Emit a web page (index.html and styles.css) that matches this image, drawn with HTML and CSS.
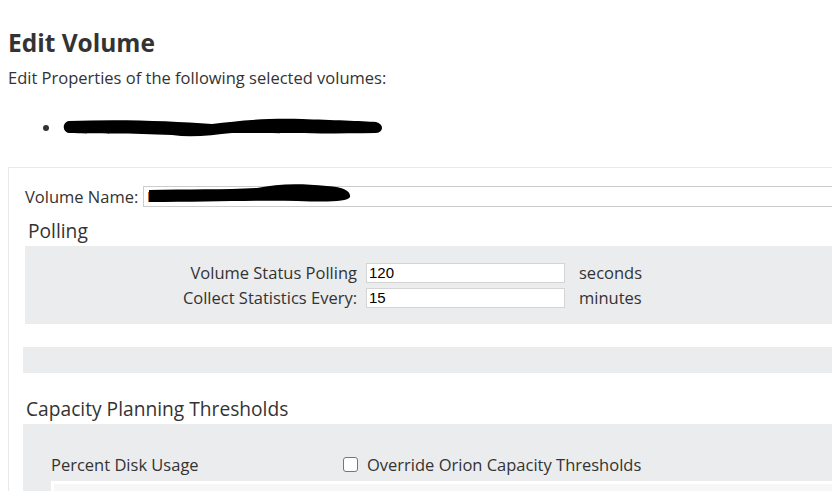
FILE: index.html
```html
<!DOCTYPE html>
<html>
<head>
<meta charset="utf-8">
<link rel="stylesheet" href="styles.css">
</head>
<body>
<div class="page">
  <h1 class="title">Edit Volume</h1>
  <p class="subtitle">Edit Properties of the following selected volumes:</p>
  <ul class="vol-list">
    <li><svg class="redact" width="322" height="22" viewBox="0 0 322 22"><path d="M7 4 C60 2 110 4 150 7 C175 4 200 1 240 2 C270 3 300 4 314 5 C322 7 322 15 314 16 C260 17 200 16 170 16 C150 18 130 21 110 18 C70 16 30 17 7 16 C0 15 0 5 7 4 Z" fill="#000"/></svg></li>
  </ul>
  <div class="card">
    <div class="name-row">
      <label class="name-label">Volume Name:</label>
      <div class="name-input"><span class="name-text">D</span><svg class="redact-name" width="205" height="24" viewBox="0 0 205 24"><path d="M2 7 C40 6 80 7 110 5 C130 1 150 0 180 3 C198 4 204 9 203 14 C200 19 180 19 150 18 C110 17 60 19 2 19 Z" fill="#000"/></svg></div>
    </div>
    <h2 class="section-title polling-title">Polling</h2>
    <div class="panel polling">
      <div class="poll-grid">
        <span class="poll-label">Volume Status Polling</span>
        <span class="poll-input">120</span>
        <span class="poll-unit">seconds</span>
        <span class="poll-label">Collect Statistics Every:</span>
        <span class="poll-input">15</span>
        <span class="poll-unit">minutes</span>
      </div>
    </div>
    <div class="panel spacer-bar"></div>
    <h2 class="section-title cap-title">Capacity Planning Thresholds</h2>
    <div class="panel capacity">
      <div class="cap-row">
        <span class="cap-label">Percent Disk Usage</span>
        <span class="cap-check"><span class="checkbox"></span>Override Orion Capacity Thresholds</span>
      </div>
      <div class="cap-inner"></div>
    </div>
  </div>
</div>
</body>
</html>
```
FILE: styles.css
```css
html, body {
  margin: 0;
  padding: 0;
  background: #fff;
  overflow: hidden;
}
body {
  font-family: "Open Sans", "Noto Sans", sans-serif;
  color: #333;
}
.page {
  padding: 0 0 0 8px;
  width: 1100px;
}
.title {
  font-size: 24.5px;
  font-weight: 700;
  margin: 0;
  padding-top: 27px;
  line-height: 32px;
  color: #333;
}
.subtitle {
  margin: 8px 0 0 0;
  font-size: 16.5px;
  line-height: 22px;
  color: #333;
}
.vol-list {
  margin: 28px 0 0 0;
  padding-left: 54px;
  list-style: disc;
  font-size: 16.5px;
  line-height: 22px;
  height: 22px;
}
.redact {
  display: block;
  margin-left: 0;
}
.card {
  margin-top: 28px;
  border-top: 1px solid #e8e8e8;
  border-left: 1px solid #e8e8e8;
  padding: 18px 0 0 14px;
  height: 400px;
}
.name-row {
  display: flex;
  align-items: center;
  gap: 5px;
  padding-left: 2px;
}
.name-label {
  font-size: 16.5px;
  line-height: 21px;
}
.name-input {
  position: relative;
  width: 800px;
  height: 19px;
  border: 1px solid #ccc;
  font-family: "Liberation Sans", Arial, sans-serif;
  font-size: 15px;
  line-height: 19px;
  padding-left: 3px;
  color: #000;
}
.name-text {
  color: #000;
}
.redact-name {
  position: absolute;
  left: 3px;
  top: -4px;
}
.section-title {
  font-size: 19.2px;
  font-weight: 400;
  margin: 0;
  line-height: 26px;
  color: #333;
}
.polling-title {
  margin-top: 11px;
  padding-left: 5px;
}
.panel {
  background: #ebecee;
}
.polling {
  margin-top: 2px;
  margin-left: 2px;
  height: 78px;
  box-sizing: border-box;
  padding-top: 17px;
}
.poll-grid {
  display: grid;
  grid-template-columns: 332px 200px auto;
  column-gap: 9px;
  row-gap: 5px;
  align-items: center;
}
.poll-label {
  font-size: 16.5px;
  text-align: right;
  line-height: 20px;
}
.poll-input {
  display: block;
  height: 18px;
  border: 1px solid #d4d4d4;
  background: #fff;
  font-family: "Liberation Sans", Arial, sans-serif;
  font-size: 15px;
  line-height: 18px;
  padding-left: 2px;
  color: #000;
  box-sizing: content-box;
  width: 195px;
}
.poll-unit {
  font-size: 16.5px;
  line-height: 20px;
  padding-left: 4px;
}
.spacer-bar {
  margin-top: 23px;
  height: 26px;
}
.cap-title {
  margin-top: 23px;
  padding-left: 3px;
}
.capacity {
  margin-top: 2px;
  height: 120px;
  padding-top: 28px;
  box-sizing: border-box;
}
.cap-row {
  display: flex;
  align-items: center;
  padding-left: 28px;
  height: 24px;
}
.cap-label {
  font-size: 16.5px;
  width: 292px;
}
.cap-check {
  display: flex;
  align-items: center;
  font-size: 16.5px;
}
.checkbox {
  display: inline-block;
  width: 13px;
  height: 13px;
  border: 1px solid #767676;
  border-radius: 3px;
  background: #fff;
  margin-right: 9px;
}
.cap-inner {
  margin-top: 5px;
  margin-left: 28px;
  height: 40px;
  background: #f7f7f7;
  border-top: 3px solid #fff;
  border-left: 3px solid #fff;
}
```
